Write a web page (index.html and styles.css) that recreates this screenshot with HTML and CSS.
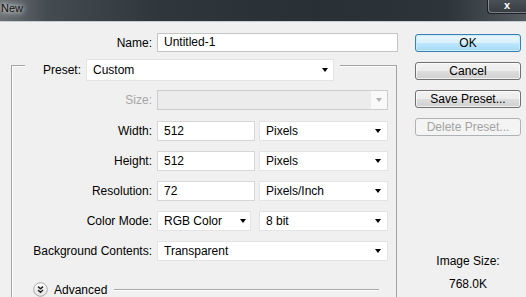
FILE: index.html
```html
<!DOCTYPE html>
<html lang="en">
<head>
  <meta charset="UTF-8" />
  <title>New</title>
  <link rel="stylesheet" href="styles.css">
</head>
<body>
  <div class="window">
    <div class="titlebar">
      <span class="title">New</span>
      <span class="close">x</span>
    </div>

    <div class="dialog">
      <div class="form">
        <div class="name-row">
          <label>Name:</label>
          <div class="field name-field">Untitled-1</div>
        </div>

        <div class="preset-box">
          <div class="preset-row">
            <label>Preset:</label>
            <div class="select preset-select">Custom</div>
          </div>

          <div class="rows">
            <label class="disabled size-label">Size:</label>
            <div class="select disabled-select"><span class="arrow-box"></span></div>

            <label>Width:</label>
            <div class="pair">
              <div class="field num">512</div>
              <div class="select unit">Pixels</div>
            </div>

            <label>Height:</label>
            <div class="pair">
              <div class="field num">512</div>
              <div class="select unit">Pixels</div>
            </div>

            <label>Resolution:</label>
            <div class="pair">
              <div class="field num">72</div>
              <div class="select unit">Pixels/Inch</div>
            </div>

            <label>Color Mode:</label>
            <div class="pair">
              <div class="select mode">RGB Color</div>
              <div class="select unit">8 bit</div>
            </div>

            <label>Background Contents:</label>
            <div class="select">Transparent</div>
          </div>

          <div class="advanced">
            <svg class="adv-icon" width="15" height="15" viewBox="0 0 15 15">
              <defs>
                <linearGradient id="advg" x1="0" y1="0" x2="0" y2="1">
                  <stop offset="0" stop-color="#ffffff"/>
                  <stop offset="1" stop-color="#e2e2e2"/>
                </linearGradient>
              </defs>
              <circle cx="7.5" cy="7.5" r="6.8" fill="url(#advg)" stroke="#a8a8a8" stroke-width="1"/>
              <path d="M5 4.6 L7.5 6.8 L10 4.6 M5 8 L7.5 10.2 L10 8" fill="none" stroke="#222" stroke-width="1.4"/>
            </svg>
            <span>Advanced</span>
            <div class="adv-line"></div>
          </div>
        </div>
      </div>

      <div class="side">
        <div class="btn btn-default">OK</div>
        <div class="btn">Cancel</div>
        <div class="btn">Save Preset...</div>
        <div class="btn btn-disabled">Delete Preset...</div>
        <div class="image-size">
          <p>Image Size:</p>
          <p>768.0K</p>
        </div>
      </div>
    </div>
  </div>
</body>
</html>
```

FILE: styles.css
```css
* {
  box-sizing: border-box;
  margin: 0;
  padding: 0;
}
body {
  width: 526px;
  height: 297px;
  overflow: hidden;
  background: #f0f0f0;
  font-family: "Liberation Sans", Arial, sans-serif;
  font-size: 12px;
  color: #000;
}
.window {
  display: flex;
  flex-direction: column;
}
.titlebar {
  height: 22px;
  display: flex;
  justify-content: space-between;
  align-items: flex-start;
  background: linear-gradient(90deg, #6a7074 0%, #454c51 9%, #30373c 30%, #293035 60%, #2e353a 85%, #555c61 100%);
  border-bottom: 1px solid #c9cdd0;
}
.title {
  font-size: 11px;
  line-height: 14px;
  padding: 1px 0 0 1px;
  color: #111;
  text-shadow: 0 0 5px #fff, 0 0 8px rgba(255, 255, 255, 0.8);
}
.close {
  width: 39px;
  height: 14px;
  border: 1px solid #1c2124;
  border-top: none;
  border-right: none;
  border-bottom-left-radius: 4px;
  box-shadow: inset 1px -1px 0 rgba(255, 255, 255, 0.35);
  background: linear-gradient(#4a5156, #353c41);
  color: #fff;
  font-weight: bold;
  font-size: 11px;
  line-height: 10px;
  text-align: center;
}

.dialog {
  display: flex;
  gap: 17px;
  padding-top: 11px;
}
.form {
  width: 398px;
}

label {
  text-align: right;
  line-height: 20px;
  white-space: nowrap;
}
.field,
.select {
  height: 20px;
  line-height: 18px;
  padding: 0 6px;
  background: #fff;
  border: 1px solid #d2d2d2;
  white-space: nowrap;
}
.select {
  display: flex;
  justify-content: space-between;
  align-items: center;
  border-color: #e4e4e4;
}
.select::after {
  content: "";
  border-top: 4px solid #000;
  border-left: 3.5px solid transparent;
  border-right: 3.5px solid transparent;
}

.name-row {
  display: flex;
  gap: 5px;
}
.name-row label {
  width: 152px;
}
.name-field {
  width: 241px;
  height: 19px;
  line-height: 17px;
  border-color: #c4c4c4;
}

.preset-box {
  margin: 12px 0 0 11px;
  width: 386px;
  height: 233px;
  border: 1px solid #a3a3a3;
  border-bottom: none;
  box-shadow: inset 1px 1px 0 #fff;
}
.preset-row {
  display: flex;
  gap: 5px;
  width: fit-content;
  margin: -7px 0 0 13px;
  padding-right: 6px;
  background: #f0f0f0;
}
.preset-row label {
  width: 56px;
  line-height: 22px;
}
.preset-select {
  width: 248px;
  height: 22px;
  line-height: 20px;
  padding-right: 5px;
}

.rows {
  display: grid;
  grid-template-columns: 140px 231px;
  column-gap: 5px;
  row-gap: 10px;
  margin-top: 9px;
}
.rows .size-label {
  margin-bottom: 1px;
}
.disabled {
  color: #a6a6a6;
}
.disabled-select {
  background: #ececec;
  border-color: #cdcdcd;
  padding: 0;
  justify-content: flex-end;
}
.disabled-select::after {
  display: none;
}
.arrow-box {
  width: 16px;
  height: 18px;
  background: #f9f9f9;
  display: flex;
  justify-content: center;
  align-items: center;
}
.arrow-box::after {
  content: "";
  border-top: 4px solid #b4b4b4;
  border-left: 3.5px solid transparent;
  border-right: 3.5px solid transparent;
}
.pair {
  display: flex;
  justify-content: space-between;
}
.num {
  width: 98px;
  border-color: #d6d6d6;
}
.mode {
  width: 94px;
  padding-right: 4px;
}
.unit {
  width: 129px;
}

.advanced {
  display: flex;
  align-items: center;
  gap: 6px;
  margin: 21px 17px 0 21px;
}
.adv-icon {
  flex: none;
}
.adv-line {
  flex: 1;
  height: 2px;
  margin-left: 1px;
  border-top: 1px solid #a8a8a8;
  border-bottom: 1px solid #fff;
}

.side {
  width: 106px;
  display: flex;
  flex-direction: column;
  gap: 10px;
  padding-top: 1px;
}
.btn {
  height: 18px;
  line-height: 16px;
  text-align: center;
  border: 1px solid #707070;
  border-radius: 3px;
  background: linear-gradient(#f3f3f3 0%, #ececec 48%, #dddddd 52%, #d0d0d0 100%);
  box-shadow: inset 0 0 0 1px rgba(255, 255, 255, 0.7);
}
.btn-default {
  border-color: #3c7fb1;
  background: linear-gradient(#eaf6fd 0%, #d9f0fc 48%, #bee6fd 52%, #a7d9f5 100%);
  box-shadow: inset 0 0 0 1px #c8ecfb;
}
.btn-disabled {
  color: #a3a3a3;
  border-color: #adb2b5;
  background: #f4f4f4;
  box-shadow: none;
}
.image-size {
  margin-top: 108px;
  text-align: center;
  line-height: 14px;
}
.image-size p + p {
  margin-top: 9px;
}
```
